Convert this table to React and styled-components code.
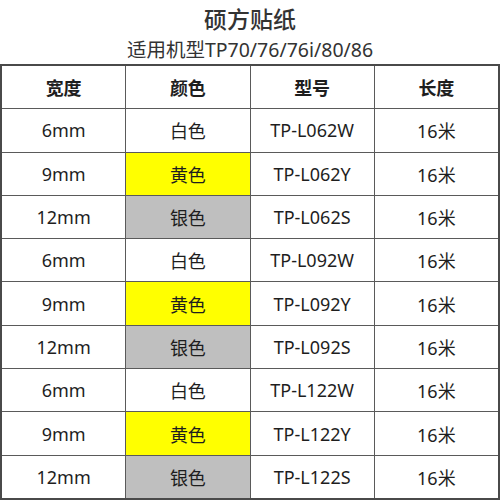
import React from "react";
import styled, { createGlobalStyle } from "styled-components";

const Global = createGlobalStyle`
  html, body { margin: 0; padding: 0; background: #fff; }
  body { font-family: "Noto Sans", "Noto Sans CJK SC", sans-serif; color: #222; }
`;

const Page = styled.div`
  width: 500px;
  height: 500px;
  display: flex;
  flex-direction: column;
  overflow: hidden;
`;

const Header = styled.div`
  height: 64px;
  display: flex;
  flex-direction: column;
  align-items: center;
  justify-content: flex-start;
`;

const Title = styled.div`
  font-family: "Noto Sans CJK SC", sans-serif;
  font-size: 23px;
  font-weight: 500;
  color: #333;
  line-height: 34px;
  margin-top: 1px;
`;

const Subtitle = styled.div`
  font-family: "Noto Sans", "Noto Sans CJK SC", sans-serif;
  font-size: 19.5px;
  color: #333;
  line-height: 28px;
  margin-top: 1px;
`;

const Grid = styled.div`
  box-sizing: border-box;
  height: 436px;
  border: 2px solid #4a4a4a;
  background: #5a5a5a;
  display: grid;
  grid-template-columns: repeat(4, 1fr);
  grid-template-rows: repeat(10, 1fr);
  gap: 1px;
`;

const Cell = styled.div`
  background: ${(p) => p.$bg || "#fff"};
  display: flex;
  align-items: center;
  justify-content: center;
  font-size: 18px;
  font-weight: ${(p) => (p.$head ? 700 : 400)};
  color: #1e1e1e;
  font-family: "Noto Sans", "Noto Sans CJK SC", sans-serif;
`;

const colors = {
  白色: "#ffffff",
  黄色: "#ffff00",
  银色: "#bfbfbf",
};

const rows = [];
["062", "092", "122"].forEach((code) => {
  rows.push(["6mm", "白色", `TP-L${code}W`, "16米"]);
  rows.push(["9mm", "黄色", `TP-L${code}Y`, "16米"]);
  rows.push(["12mm", "银色", `TP-L${code}S`, "16米"]);
});

export default function App() {
  return (
    <Page>
      <Global />
      <Header>
        <Title>硕方贴纸</Title>
        <Subtitle>适用机型TP70/76/76i/80/86</Subtitle>
      </Header>
      <Grid>
        {["宽度", "颜色", "型号", "长度"].map((h) => (
          <Cell key={h} $head>
            {h}
          </Cell>
        ))}
        {rows.map((r, i) =>
          r.map((c, j) => (
            <Cell key={`${i}-${j}`} $bg={j === 1 ? colors[c] : undefined}>
              {c}
            </Cell>
          ))
        )}
      </Grid>
    </Page>
  );
}
